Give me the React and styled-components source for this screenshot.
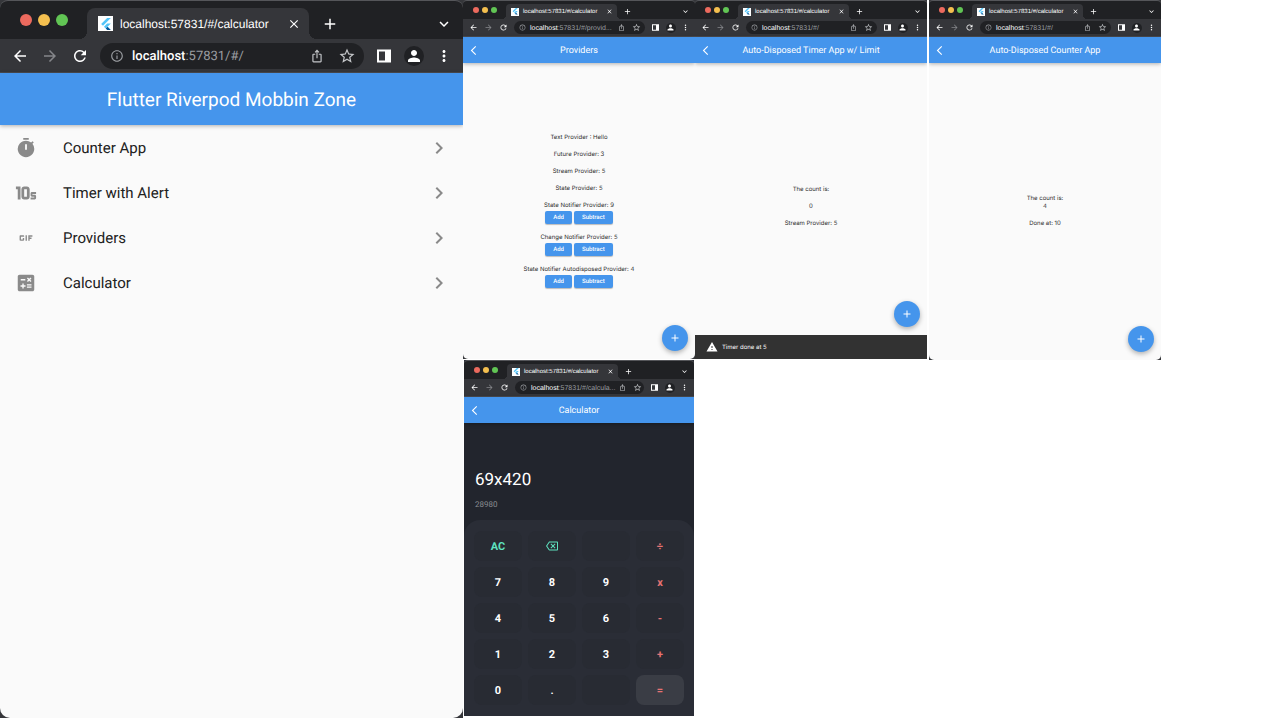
import React from 'react';
import styled, { createGlobalStyle, css, ThemeProvider } from 'styled-components';
import {
  MdArrowBack, MdArrowForward, MdRefresh, MdInfoOutline, MdIosShare, MdStarBorder,
  MdPerson, MdMoreVert, MdKeyboardArrowDown, MdClose, MdAdd, MdTimer10Select,
  MdGif, MdCalculate, MdChevronRight, MdWarning, MdOutlineBackspace, MdArrowBackIosNew,
} from 'react-icons/md';

const large = {
  strip: 39, tabTop: 8, tabWidth: 222, tabPad: 11, tabGap: 7, tabRadius: 8, tabMargin: 19,
  dot: 12, dotGap: 6, stripPad: 20, favicon: 15, titleFont: 12, slot: 30, edge: 5,
  toolbar: 34, pill: 26, pillPad: 2, urlFont: 13, urlFace: 'Roboto', avatar: 20,
  bar: 52, barFont: 19, barLine: 24,
  icon: 18, smallIcon: 14, addIcon: 18, backIcon: 22, corner: 10,
};

const small = {
  strip: 19, tabTop: 4, tabWidth: 111, tabPad: 5, tabGap: 4, tabRadius: 4, tabMargin: 9,
  dot: 6, dotGap: 3, stripPad: 10, favicon: 8, titleFont: 6, slot: 15, edge: 3,
  toolbar: 18, pill: 13, pillPad: 1, urlFont: 7, urlFace: '"Liberation Sans"', avatar: 10,
  bar: 26, barFont: 9, barLine: 12,
  icon: 9, smallIcon: 7, addIcon: 9, backIcon: 11, corner: 5,
};

const blue = '#4595ec';
const tinyFace = 'Inter, Roboto, sans-serif';

const GlobalStyle = createGlobalStyle`
  * { box-sizing: border-box; }
  body {
    margin: 0;
    background: #fff;
    font-family: Roboto, "Liberation Sans", sans-serif;
    text-rendering: geometricPrecision;
  }
  button { border: 0; padding: 0; margin: 0; background: none; color: inherit; font: inherit; text-rendering: inherit; cursor: pointer; }
  a { color: inherit; text-decoration: none; }
  svg { display: block; flex: none; }
`;

const Board = styled.main`
  display: grid;
  grid-template-columns: 463fr 232fr 232fr 234fr 119fr;
  grid-template-rows: minmax(360px, 1fr) minmax(360px, 1fr);
  min-height: 100vh;
`;

const Frame = styled.section`
  display: flex;
  flex-direction: column;
  min-width: 0;
  grid-column: ${(p) => p.$column};
  grid-row: ${(p) => p.$row};
  margin: ${(p) => p.$margin};
  background: ${(p) => (p.$square ? '#2a2d36' : '#35363a')};
  overflow: hidden;
`;

const TabStrip = styled.div`
  display: flex;
  align-items: stretch;
  height: ${(p) => p.theme.strip}px;
  padding: 0 ${(p) => p.theme.edge - 1}px 0 ${(p) => p.theme.stripPad}px;
  background: #202124;
  border-top: 1px solid #55565a;
  border-radius: ${(p) => p.theme.tabRadius}px ${(p) => p.theme.tabRadius}px 0 0;
  color: #fff;
`;

const Lights = styled.div`
  display: flex;
  align-items: center;
  gap: ${(p) => p.theme.dotGap}px;
`;

const Light = styled.button`
  width: ${(p) => p.theme.dot}px;
  height: ${(p) => p.theme.dot}px;
  border-radius: 50%;
  background: ${(p) => p.$color};
`;

const Tab = styled.div`
  position: relative;
  display: flex;
  align-items: center;
  width: ${(p) => p.theme.tabWidth}px;
  margin: ${(p) => p.theme.tabTop - 1}px 0 0 ${(p) => p.theme.tabMargin}px;
  padding: 0 0 0 ${(p) => p.theme.tabPad}px;
  gap: ${(p) => p.theme.tabGap}px;
  background: #35363a;
  border-radius: ${(p) => p.theme.tabRadius}px ${(p) => p.theme.tabRadius}px 0 0;

  &::before,
  &::after {
    content: '';
    position: absolute;
    bottom: 0;
    width: ${(p) => p.theme.tabRadius}px;
    height: ${(p) => p.theme.tabRadius}px;
  }
  &::before {
    right: 100%;
    background: radial-gradient(circle at 0 0, transparent 70%, #35363a 72%);
  }
  &::after {
    left: 100%;
    background: radial-gradient(circle at 100% 0, transparent 70%, #35363a 72%);
  }
`;

const Favicon = styled.span`
  display: flex;
  flex: none;
  align-items: center;
  justify-content: center;
  width: ${(p) => p.theme.favicon}px;
  height: ${(p) => p.theme.favicon}px;
  background: #fff;

  svg { width: 80%; height: 80%; }
`;

const TabTitle = styled.span`
  flex: 1;
  white-space: nowrap;
  font-family: "Liberation Sans", sans-serif;
  font-size: ${(p) => p.theme.titleFont}px;
`;

const Slot = styled.button`
  display: flex;
  flex: none;
  align-items: center;
  justify-content: center;
  width: ${(p) => p.theme.slot}px;
  color: ${(p) => p.$color || '#fff'};

  svg {
    width: ${(p) => p.theme[p.$icon || 'icon']}px;
    height: ${(p) => p.theme[p.$icon || 'icon']}px;
  }
`;

const NewTab = styled(Slot)`
  margin: ${(p) => p.theme.tabTop - 1}px auto 0 ${(p) => p.theme.dotGap}px;
`;

const TabMenu = styled(Slot)`
  margin-top: ${(p) => p.theme.tabTop - 1}px;
`;

const Toolbar = styled.div`
  display: flex;
  align-items: center;
  height: ${(p) => p.theme.toolbar}px;
  padding: 0 ${(p) => p.theme.edge - 1}px 0 ${(p) => p.theme.edge}px;
  background: #35363a;
  border-bottom: 1px solid #4a4b50;
`;

const AddressBar = styled.div`
  display: flex;
  flex: 1;
  align-items: center;
  min-width: 0;
  height: ${(p) => p.theme.pill}px;
  margin: 0 ${(p) => p.theme.edge}px;
  padding: 0 ${(p) => p.theme.pillPad}px;
  background: #202124;
  border-radius: ${(p) => p.theme.pill}px;
`;

const Url = styled.a`
  flex: 1;
  padding-top: 1px;
  white-space: nowrap;
  font-family: ${(p) => p.theme.urlFace}, sans-serif;
  font-size: ${(p) => p.theme.urlFont}px;
  color: #9a9da1;
`;

const Host = styled.span`
  color: #fff;
  font-weight: 500;
`;

const Avatar = styled.span`
  display: flex;
  align-items: center;
  justify-content: center;
  width: ${(p) => p.theme.avatar}px;
  height: ${(p) => p.theme.avatar}px;
  border-radius: 50%;
  background: #202124;
`;

const Bar = styled.header`
  position: relative;
  z-index: 1;
  display: grid;
  grid-template-columns: ${(p) => p.theme.slot}px 1fr ${(p) => p.theme.slot}px;
  align-items: center;
  height: ${(p) => p.theme.bar}px;
  padding: 0 ${(p) => p.theme.edge}px;
  background: ${blue};
  color: #fff;
  box-shadow: 0 1px 4px rgba(0, 0, 0, 0.3);
`;

const BarTitle = styled.h1`
  grid-column: 2;
  margin: 0;
  padding-top: 2px;
  text-align: center;
  white-space: nowrap;
  font-size: ${(p) => p.theme.barFont}px;
  line-height: ${(p) => p.theme.barLine}px;
  font-weight: 400;
`;

const Body = styled.div`
  position: relative;
  display: flex;
  flex: 1;
  flex-direction: column;
  background: #fafafa;
  border-radius: 0 0 ${(p) => p.theme.corner}px ${(p) => p.theme.corner}px;
`;

const Menu = styled.nav`
  display: flex;
  flex-direction: column;
`;

const MenuRow = styled.a`
  display: grid;
  grid-template-columns: 47px 1fr 24px;
  align-items: center;
  height: 45px;
  padding: 0 12px 0 16px;
  color: #212121;
  font-size: 15px;

  svg { color: #8a8a8a; }
`;

const RowIcon = styled.span`
  display: flex;
  justify-content: center;
  width: 20px;
`;

const Stack = styled.div`
  display: flex;
  flex: 1;
  flex-direction: column;
  align-items: center;
  justify-content: center;
  gap: 9px;
  padding-bottom: ${(p) => p.$tail || 0}px;
`;

const Line = styled.p`
  margin: 0;
  font-family: ${tinyFace};
  font-size: 6px;
  line-height: 8px;
  text-align: center;
  color: #2c2c2c;
`;

const Counter = styled.div`
  display: flex;
  flex-direction: column;
  align-items: center;
  gap: 1px;
  padding-bottom: 1px;
`;

const ButtonRow = styled.div`
  display: flex;
  gap: 2px;
`;

const Raised = styled.button`
  height: 13px;
  padding: 0 8px;
  border-radius: 2px;
  background: ${blue};
  color: #fff;
  font-size: 6px;
  font-weight: 500;
  line-height: 13px;
  box-shadow: 0 1px 1px rgba(0, 0, 0, 0.25);
`;

const Fab = styled.button`
  position: absolute;
  right: 7px;
  bottom: ${(p) => (p.$raised ? 32 : 8)}px;
  display: flex;
  align-items: center;
  justify-content: center;
  width: 26px;
  height: 26px;
  border-radius: 50%;
  background: ${blue};
  color: #fff;
  box-shadow: 0 2px 5px rgba(0, 0, 0, 0.3);
`;

const Snackbar = styled.div`
  position: absolute;
  right: 0;
  bottom: 0;
  left: 0;
  display: flex;
  align-items: center;
  gap: 4px;
  height: 24px;
  padding: 0 11px;
  background: #323232;
  color: #fff;
  font-family: ${tinyFace};
  font-size: 6px;
`;

const Display = styled.div`
  display: flex;
  flex: 1;
  flex-direction: column;
  justify-content: flex-end;
  gap: 10px;
  padding: 0 11px 10px;
  background: #22252d;
`;

const Expression = styled.output`
  color: #fff;
  font-size: 17px;
  line-height: 20px;
`;

const Result = styled.output`
  color: #8b8d92;
  font-size: 8px;
  line-height: 10px;
`;

const KeypadArea = styled.div`
  background: #22252d;
`;

const Keypad = styled.div`
  display: grid;
  grid-template-columns: repeat(4, 1fr);
  gap: 6px;
  padding: 11px 10px;
  background: #2a2d36;
  border-radius: 16px 16px 0 0;
`;

const keyColors = { digit: '#fff', action: '#5fe3c0', operator: '#e57373' };

const Key = styled.button`
  display: flex;
  align-items: center;
  justify-content: center;
  height: 30px;
  border-radius: 8px;
  background: #282b33;
  color: ${(p) => keyColors[p.$kind]};
  font-size: 11px;
  font-weight: 700;

  ${(p) => p.$active && css`background: #3a3d45;`}
`;

function FlutterLogo() {
  return (
    <svg viewBox="0 0 24 24" aria-hidden="true">
      <path fill="#54c5f8" d="M14.3 0 2.3 12 6 15.7 21.7 0z" />
      <path fill="#54c5f8" d="M14.3 11.1 7.9 17.5l3.7 3.7 10.1-10.1z" />
      <path fill="#01579b" d="m11.6 21.2 2.7 2.8h7.4l-6.5-6.5z" />
    </svg>
  );
}

function SidePanelIcon() {
  return (
    <svg viewBox="0 0 18 18" aria-hidden="true">
      <path fill="currentColor" fillRule="evenodd" d="M2 2.5h14v13H2zM4 4.500v9h6v-9z" />
    </svg>
  );
}

function StopwatchIcon({ size }) {
  return (
    <svg width={size} height={size} viewBox="0 0 24 24" aria-hidden="true">
      <path
        fill="currentColor"
        fillRule="evenodd"
        d="M9 1h6v2H9zM19.030 7.390l1.420-1.420c-.43-.51-.9-.99-1.410-1.410l-1.420 1.420A8.960 8.960 0 0 0 12 4a9 9 0 1 0 7.030 3.390zM11 8h2v6h-2z"
      />
    </svg>
  );
}

function BrowserChrome({ path }) {
  return (
    <>
      <TabStrip>
        <Lights>
          <Light $color="#ec6a5e" aria-label="Close window" />
          <Light $color="#f4bf4f" aria-label="Minimize window" />
          <Light $color="#61c554" aria-label="Zoom window" />
        </Lights>
        <Tab>
          <Favicon><FlutterLogo /></Favicon>
          <TabTitle>localhost:57831/#/calculator</TabTitle>
          <Slot $icon="smallIcon" aria-label="Close tab"><MdClose /></Slot>
        </Tab>
        <NewTab $icon="addIcon" aria-label="New tab"><MdAdd /></NewTab>
        <TabMenu aria-label="Search tabs"><MdKeyboardArrowDown /></TabMenu>
      </TabStrip>
      <Toolbar>
        <Slot aria-label="Back"><MdArrowBack /></Slot>
        <Slot $color="#85868a" aria-label="Forward"><MdArrowForward /></Slot>
        <Slot aria-label="Reload"><MdRefresh /></Slot>
        <AddressBar>
          <Slot $icon="smallIcon" $color="#9a9da1" aria-label="Site information"><MdInfoOutline /></Slot>
          <Url href="#/"><Host>localhost</Host>{path}</Url>
          <Slot $icon="smallIcon" $color="#c4c6c9" aria-label="Share"><MdIosShare /></Slot>
          <Slot $color="#c4c6c9" aria-label="Bookmark"><MdStarBorder /></Slot>
        </AddressBar>
        <Slot aria-label="Side panel"><SidePanelIcon /></Slot>
        <Slot aria-label="Profile"><Avatar><MdPerson /></Avatar></Slot>
        <Slot aria-label="Browser menu"><MdMoreVert /></Slot>
      </Toolbar>
    </>
  );
}

function BrowserWindow({ size = small, path = ':57831/#/', title, back, children, ...place }) {
  return (
    <ThemeProvider theme={size}>
      <Frame {...place}>
        <BrowserChrome path={path} />
        <Bar>
          {back && <Slot $icon="backIcon" aria-label="Go back"><MdArrowBackIosNew /></Slot>}
          <BarTitle>{title}</BarTitle>
        </Bar>
        {children}
      </Frame>
    </ThemeProvider>
  );
}

const menuItems = [
  { label: 'Counter App', Icon: StopwatchIcon },
  { label: 'Timer with Alert', Icon: MdTimer10Select },
  { label: 'Providers', Icon: MdGif },
  { label: 'Calculator', Icon: MdCalculate },
];

const values = ['Text Provider : Hello', 'Future Provider: 3', 'Stream Provider: 5', 'State Provider: 5'];
const counters = [
  'State Notifier Provider: 9',
  'Change Notifier Provider: 5',
  'State Notifier Autodisposed Provider: 4',
];

const keys = [
  ['AC', 'action'], ['back', 'action'], ['', 'digit'], ['÷', 'operator'],
  ['7', 'digit'], ['8', 'digit'], ['9', 'digit'], ['x', 'operator'],
  ['4', 'digit'], ['5', 'digit'], ['6', 'digit'], ['-', 'operator'],
  ['1', 'digit'], ['2', 'digit'], ['3', 'digit'], ['+', 'operator'],
  ['0', 'digit'], ['.', 'digit'], ['', 'digit'], ['=', 'operator'],
];

function AddFab({ raised }) {
  return <Fab $raised={raised} aria-label="Add"><MdAdd size={12} /></Fab>;
}

export default function App() {
  return (
    <>
      <GlobalStyle />
      <Board>
        <BrowserWindow size={large} title="Flutter Riverpod Mobbin Zone" $column="1" $row="1 / 3" $margin="0 0 2px">
          <Body>
            <Menu>
              {menuItems.map(({ label, Icon }) => (
                <MenuRow key={label} href="#/">
                  <RowIcon><Icon size={22} /></RowIcon>
                  <span>{label}</span>
                  <MdChevronRight size={24} />
                </MenuRow>
              ))}
            </Menu>
          </Body>
        </BrowserWindow>

        <BrowserWindow back title="Providers" path=":57831/#/provid..." $column="2" $row="1" $margin="0 0 1px">
          <Body>
            <Stack>
              {values.map((text) => <Line key={text}>{text}</Line>)}
              {counters.map((text) => (
                <Counter key={text}>
                  <Line>{text}</Line>
                  <ButtonRow>
                    <Raised>Add</Raised>
                    <Raised>Subtract</Raised>
                  </ButtonRow>
                </Counter>
              ))}
            </Stack>
            <AddFab />
          </Body>
        </BrowserWindow>

        <BrowserWindow back title="Auto-Disposed Timer App w/ Limit" $column="3" $row="1" $margin="0 0 1px">
          <Body>
            <Stack $tail={8}>
              <Line>The count is:</Line>
              <Line>0</Line>
              <Line>Stream Provider: 5</Line>
            </Stack>
            <AddFab raised />
            <Snackbar role="status"><MdWarning size={12} />Timer done at 5</Snackbar>
          </Body>
        </BrowserWindow>

        <BrowserWindow back title="Auto-Disposed Counter App" $column="4" $row="1" $margin="0 0 0 2px">
          <Body>
            <Stack>
              <Line>The count is:<br />4</Line>
              <Line>Done at: 10</Line>
            </Stack>
            <AddFab />
          </Body>
        </BrowserWindow>

        <BrowserWindow back title="Calculator" path=":57831/#/calcula..." $column="2" $row="2" $margin="0 1px 4px" $square>
          <Display>
            <Expression>69x420</Expression>
            <Result>28980</Result>
          </Display>
          <KeypadArea>
            <Keypad>
              {keys.map(([label, kind], i) => (
                <Key key={i} $kind={kind} $active={label === '='} aria-label={label || 'Blank'}>
                  {label === 'back' ? <MdOutlineBackspace size={12} /> : label}
                </Key>
              ))}
            </Keypad>
          </KeypadArea>
        </BrowserWindow>
      </Board>
    </>
  );
}
